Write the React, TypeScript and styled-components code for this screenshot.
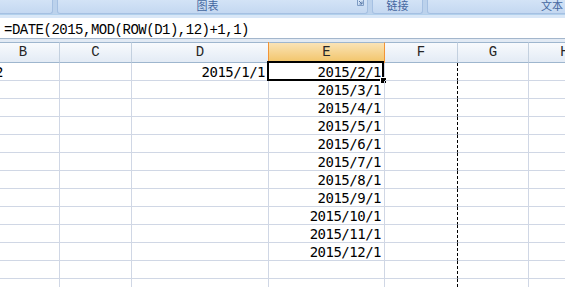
import styled, { createGlobalStyle } from 'styled-components'

const GlobalStyle = createGlobalStyle`
  html, body {
    margin: 0;
    padding: 0;
    background: #ffffff;
    overflow: hidden;
  }
`

const columns = [
  { name: 'B', width: 73 },
  { name: 'C', width: 72 },
  { name: 'D', width: 137 },
  { name: 'E', width: 116 },
  { name: 'F', width: 73 },
  { name: 'G', width: 71 },
  { name: 'H', width: 72 },
]

const ACTIVE_COL = 'E'
const PAGE_BREAK_COL = 'F'

const rows: Record<string, string>[] = [
  { B: '2', D: '2015/1/1', E: '2015/2/1' },
  { E: '2015/3/1' },
  { E: '2015/4/1' },
  { E: '2015/5/1' },
  { E: '2015/6/1' },
  { E: '2015/7/1' },
  { E: '2015/8/1' },
  { E: '2015/9/1' },
  { E: '2015/10/1' },
  { E: '2015/11/1' },
  { E: '2015/12/1' },
  {},
  {},
]

const ribbonGroups = [
  { label: '', width: 60, launcher: false },
  { label: '图表', width: 311, launcher: true },
  { label: '链接', width: 51, launcher: false },
  { label: '文本', width: 250, launcher: false },
]

export default function App() {
  return (
    <Page>
      <GlobalStyle />
      <Ribbon>
        {ribbonGroups.map((group, i) => (
          <RibbonGroup key={i} $width={group.width}>
            <GroupLabel>{group.label}</GroupLabel>
            {group.launcher && (
              <Launcher width="7" height="6" viewBox="0 0 7 6">
                <path d="M0.5 0 V5.5 H6.5 V0" fill="none" stroke="#7e9cc4" strokeWidth="1" />
                <path d="M2 1 L5 4 M5 1.5 V4 H2.5" fill="none" stroke="#5a7aa8" strokeWidth="1" />
              </Launcher>
            )}
          </RibbonGroup>
        ))}
      </Ribbon>
      <RibbonEdge />
      <FormulaBar>=DATE(2015,MOD(ROW(D1),12)+1,1)</FormulaBar>
      <BarGap />
      <Sheet>
        {columns.map((col) => (
          <HeaderCell key={col.name} $active={col.name === ACTIVE_COL}>
            {col.name}
          </HeaderCell>
        ))}
        {rows.map((row, r) =>
          columns.map((col) => (
            <Cell
              key={`${r}-${col.name}`}
              $left={col.name === 'B'}
              $pageBreak={col.name === PAGE_BREAK_COL}
            >
              {row[col.name]}
              {r === 0 && col.name === ACTIVE_COL && (
                <Selection>
                  <FillHandle />
                </Selection>
              )}
            </Cell>
          ))
        )}
      </Sheet>
    </Page>
  )
}

const Page = styled.div`
  width: 565px;
  height: 287px;
  overflow: hidden;
  background: #ffffff;
`

const Ribbon = styled.div`
  display: flex;
  gap: 4px;
  height: 14px;
  margin-left: -7px;
  background: #bcd2ec;
`

const RibbonGroup = styled.div<{ $width: number }>`
  flex: none;
  box-sizing: border-box;
  width: ${(p) => p.$width}px;
  height: 14px;
  display: flex;
  align-items: flex-end;
  background: linear-gradient(#d3e3f6, #c4d8f1);
  border: 1px solid #a5c0e2;
  border-top: none;
  border-radius: 0 0 3px 3px;
  overflow: hidden;
`

const GroupLabel = styled.div`
  flex: 1;
  text-align: center;
  font-family: 'Noto Sans CJK SC', sans-serif;
  font-size: 11px;
  line-height: 11px;
  padding-bottom: 2px;
  color: #4467a0;
  white-space: nowrap;
`

const Launcher = styled.svg`
  flex: none;
  align-self: flex-start;
  margin-right: 3px;
`

const RibbonEdge = styled.div`
  height: 3px;
  background: #d9e7f7;
  border-top: 1px solid #b2d0ec;
`

const FormulaBar = styled.div`
  box-sizing: border-box;
  height: 21px;
  padding: 4px 0 0 4px;
  background: #ffffff;
  border-bottom: 1px solid #a3b6cc;
  font-family: 'Liberation Mono', monospace;
  font-size: 14px;
  letter-spacing: -0.5px;
  line-height: 17px;
  color: #000000;
  white-space: nowrap;
`

const BarGap = styled.div`
  height: 3px;
  background: #e2eaf4;
`

const Sheet = styled.div`
  display: grid;
  grid-template-columns: ${columns.map((c) => `${c.width}px`).join(' ')};
  margin-left: -13px;
`

const HeaderCell = styled.div<{ $active: boolean }>`
  box-sizing: border-box;
  height: 21px;
  border-top: 1px solid #9eb6ce;
  border-bottom: 1px solid ${(p) => (p.$active ? '#f29436' : '#9eb6ce')};
  border-right: 1px solid ${(p) => (p.$active ? '#f29436' : '#c3d0df')};
  box-shadow: ${(p) => (p.$active ? '-1px 0 0 #f29436' : 'none')};
  background: ${(p) =>
    p.$active ? 'linear-gradient(#fae3b6, #f2c56a)' : 'linear-gradient(#f8fafd, #e3ebf5)'};
  text-align: center;
  font-family: 'Liberation Mono', monospace;
  font-size: 14px;
  line-height: 19px;
  color: #262626;
`

const Cell = styled.div<{ $left: boolean; $pageBreak: boolean }>`
  position: relative;
  box-sizing: border-box;
  height: 18px;
  padding: 2px ${(p) => (p.$left ? '0' : '3px')} 0 ${(p) => (p.$left ? '8px' : '0')};
  border-bottom: 1px solid #d0d7e5;
  border-right: 1px ${(p) => (p.$pageBreak ? 'dashed #000000' : 'solid #d0d7e5')};
  text-align: ${(p) => (p.$left ? 'left' : 'right')};
  font-family: 'DejaVu Sans Mono', monospace;
  font-size: 14px;
  letter-spacing: -0.5px;
  line-height: 15px;
  color: #000000;
  white-space: nowrap;
`

const Selection = styled.div`
  position: absolute;
  left: -2px;
  top: -2px;
  right: 0;
  bottom: -1px;
  border: 2px solid #000000;
  pointer-events: none;
`

const FillHandle = styled.div`
  position: absolute;
  right: -5px;
  bottom: -5px;
  width: 5px;
  height: 5px;
  background: #000000;
  border: 1px solid #ffffff;
`
